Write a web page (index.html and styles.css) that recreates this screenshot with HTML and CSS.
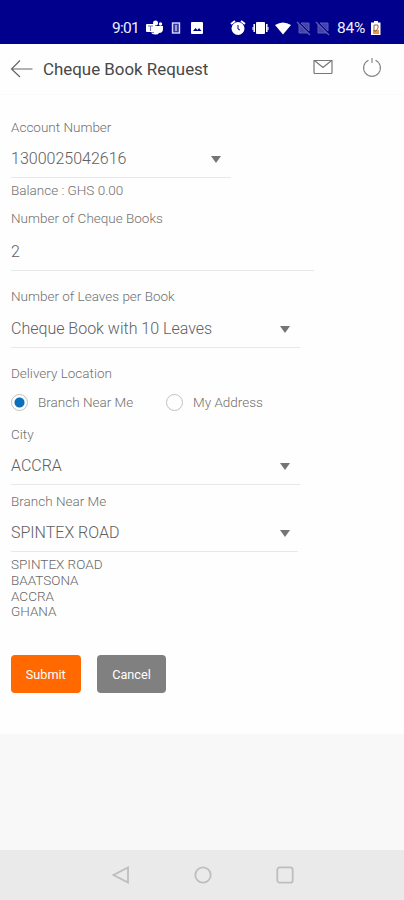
FILE: index.html
```html
<!DOCTYPE html>
<html lang="en">
<head>
<meta charset="utf-8">
<title>Cheque Book Request</title>
<link rel="stylesheet" href="styles.css">
</head>
<body>
<div class="status">
  <span class="clock">9:01</span>
  <svg class="status-icons" width="62" height="18" viewBox="0 0 62 18" fill="#fff">
    <rect x="1" y="5" width="9" height="8" rx="1"/><path d="M3 7h5M5.500 7v5" stroke="#7070c0" fill="none"/>
    <circle cx="10.500" cy="4" r="2.500"/><circle cx="15.500" cy="5" r="1.700"/><path d="M9 7h9v3a4 4 0 0 1-4 4q-1 2-4 1.500-3 0-4-2h3z"/>
    <rect x="27.500" y="4" width="7" height="10" fill="#3838a4" stroke="#d8d8ff" stroke-width="1.400"/><path d="M31 6v6" stroke="#fff"/>
    <path d="M47 3h10a1 1 0 0 1 1 1v10a1 1 0 0 1-1 1H47a1 1 0 0 1-1-1V4a1 1 0 0 1 1-1z"/><path d="M48 12l2.500-3 2 2 1.500-2 2.500 3z" fill="#00008c"/>
  </svg>
  <svg class="status-more" width="102" height="18" viewBox="0 0 102 18" fill="#fff">
    <circle cx="8" cy="9.500" r="6.500"/><path d="M1 5l4-3M15 5l-4-3" stroke="#fff" stroke-width="2"/><path d="M8 6v4l2 1" stroke="#00008c" fill="none"/>
    <rect x="26" y="3" width="9" height="12" rx="1"/><path d="M24.200 5v8M36.800 5v8" stroke="#fff" stroke-width="1.500"/><path d="M23 8v3M38 8v3" stroke="#fff"/>
    <path d="M45 6q8-5 16 0l-8 9.500z"/>
    <g fill="#4444a8" stroke="#5b5bb7"><path d="M69 5v9h9zM71 4h8v8z"/><path d="M67 3l13 13" stroke-width="1.300"/><path d="M88 5v9h9zM90 4h8v8z"/><path d="M86 3l13 13" stroke-width="1.300"/></g>
  </svg>
  <span class="percent">84%</span>
  <svg class="battery" width="12" height="16" viewBox="0 0 12 16"><path d="M4 1h4v1.500h2.500V15H1V2.500h3z" fill="#fff"/><path d="M3 10h6v4H3z" fill="#e69a50"/><path d="M4 5h4v3l-2 3H4z" stroke="#9a6045" fill="none"/></svg>
</div>
<header class="header">
  <svg class="back" width="24" height="20" viewBox="0 0 24 20"><path d="M22.500 10H1.500M10 1.500L1.500 10l8.500 8" fill="none" stroke="#666" stroke-width="1.200"/></svg>
  <h1>Cheque Book Request</h1>
  <svg class="mail" width="20" height="16" viewBox="0 0 20 16"><path d="M1 1.500h18v12a1 1 0 0 1-1 1H2a1 1 0 0 1-1-1zM2 2l8 6.500L18 2" fill="none" stroke="#777" stroke-width="1.200"/></svg>
  <svg class="power" width="20" height="22" viewBox="0 0 20 22"><path d="M6.500 4.300a8.400 8.400 0 1 0 7 0M10 2v5" fill="none" stroke="#888" stroke-width="1.200"/></svg>
</header>
<main class="form">
  <div class="label">Account Number</div>
  <div class="field narrow"><span class="account">1300025042616</span><i class="caret"></i></div>
  <div class="label balance">Balance : GHS 0.00</div>
  <div class="label books">Number of Cheque Books</div>
  <div class="field wide"><span>2</span></div>
  <div class="label leaves">Number of Leaves per Book</div>
  <div class="field"><span>Cheque Book with 10 Leaves</span><i class="caret"></i></div>
  <div class="label location">Delivery Location</div>
  <div class="radios">
    <span class="radio on"></span><span class="option first">Branch Near Me</span>
    <span class="radio"></span><span class="option">My Address</span>
  </div>
  <div class="label city">City</div>
  <div class="field"><span>ACCRA</span><i class="caret"></i></div>
  <div class="label branch">Branch Near Me</div>
  <div class="field branch-field"><span>SPINTEX ROAD</span><i class="caret"></i></div>
  <div class="address">SPINTEX ROAD<br>BAATSONA<br>ACCRA<br>GHANA</div>
  <div class="actions"><button class="submit">Submit</button><button class="cancel">Cancel</button></div>
</main>
<nav class="nav">
  <svg width="18" height="18" viewBox="0 0 18 18"><path d="M16 1.500v15L1.500 9z"/></svg>
  <svg width="18" height="18" viewBox="0 0 18 18"><circle cx="9" cy="9" r="7.700"/></svg>
  <svg width="18" height="18" viewBox="0 0 18 18"><rect x="1.300" y="1.300" width="15.400" height="15.400" rx="2.500"/></svg>
</nav>
</body>
</html>
```
FILE: styles.css
```css
* { box-sizing: border-box; }
body {
  margin: 0;
  width: 404px;
  height: 900px;
  display: flex;
  flex-direction: column;
  background: #f8f8f8;
  font-family: Roboto, sans-serif;
  overflow: hidden;
}
svg { display: block; flex: none; }
.status {
  height: 44px;
  flex: none;
  display: flex;
  align-items: center;
  padding: 12px 0 0 112px;
  background: #00008c;
  color: #f0f0ff;
  font-size: 15.5px;
}
.clock { width: 34px; letter-spacing: -.7px; }
.status-icons { margin-left: -1px; }
.status-more { margin-left: 23px; }
.percent { width: 32px; margin-left: 5px; letter-spacing: -.2px; white-space: nowrap; }
.battery { margin-left: 1px; }
.header {
  height: 51px;
  flex: none;
  display: flex;
  align-items: center;
  padding-left: 10px;
  background: #fefefe;
  border-bottom: 1px solid #fafafa;
}
.header h1 {
  width: 170px;
  margin: 0 0 0 9px;
  font-size: 16.9px;
  line-height: 22px;
  font-weight: 400;
  color: #484848;
  white-space: nowrap;
}
.mail { margin: -4px 0 0 100px; }
.power { margin: -4px 0 0 29px; }
.form {
  height: 639px;
  flex: none;
  padding: 24px 0 0 11px;
  background: #fefefe;
  font-weight: 300;
}
.label {
  height: 16px;
  line-height: 16px;
  font-size: 13.5px;
  color: #707070;
  white-space: nowrap;
}
.field {
  width: 289px;
  height: 38px;
  margin-top: 5px;
  padding-right: 10px;
  display: flex;
  align-items: center;
  justify-content: space-between;
  border-bottom: 1px solid #e8e8e8;
  font-size: 16px;
  color: #606060;
}
.narrow { width: 220px; }
.wide { width: 303px; margin-top: 7px; }
.branch-field { width: 287px; padding-right: 8px; }
.caret {
  border: 5px solid transparent;
  border-top: 7px solid #757575;
  border-bottom: 0;
  margin-top: 2px;
}
.balance { margin-top: 4px; }
.books { margin-top: 12px; }
.leaves { margin: 17px 0 6px; }
.location { margin-top: 17px; }
.radios {
  height: 18px;
  margin-top: 12px;
  display: flex;
  align-items: center;
  font-size: 13.5px;
  color: #707070;
}
.radio {
  width: 17px;
  height: 17px;
  border: 1px solid #c0c0c0;
  border-radius: 50%;
}
.on { background: radial-gradient(circle, #0870bd 4.5px, #fefefe 5.5px); }
.option { margin-left: 10px; }
.first { width: 128px; }
.city { margin-top: 15px; }
.branch { margin-top: 8px; }
.address {
  margin-top: 5px;
  font-size: 13.5px;
  line-height: 15.75px;
  color: #686868;
}
.actions { display: flex; gap: 16.5px; margin-top: 35px; }
button {
  height: 38px;
  width: 69.5px;
  padding: 0;
  border: 0;
  border-radius: 4px;
  color: #fff;
  font: 400 12.7px Roboto, sans-serif;
}
.submit { background: #ff6900; }
.cancel { width: 69px; background: #808080; }
.nav {
  height: 50px;
  margin-top: auto;
  display: flex;
  align-items: center;
  gap: 64px;
  padding-left: 112px;
  background: #eaeaea;
}
.nav svg { fill: none; stroke: #bebebe; stroke-width: 1.8; }
```
